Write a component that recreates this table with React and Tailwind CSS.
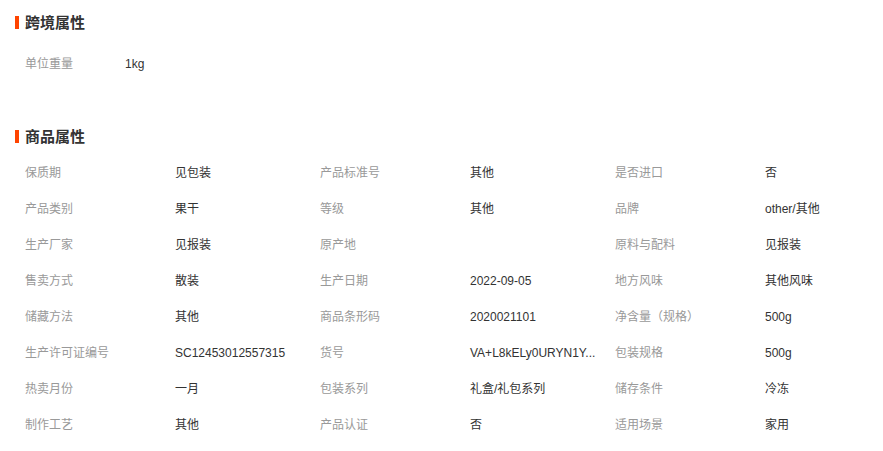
const crossAttrs = [{ label: "单位重量", value: "1kg" }];

const goodsAttrs = [
  ["保质期", "见包装"],
  ["产品标准号", "其他"],
  ["是否进口", "否"],
  ["产品类别", "果干"],
  ["等级", "其他"],
  ["品牌", "other/其他"],
  ["生产厂家", "见报装"],
  ["原产地", ""],
  ["原料与配料", "见报装"],
  ["售卖方式", "散装"],
  ["生产日期", "2022-09-05"],
  ["地方风味", "其他风味"],
  ["储藏方法", "其他"],
  ["商品条形码", "2020021101"],
  ["净含量（规格）", "500g"],
  ["生产许可证编号", "SC12453012557315"],
  ["货号", "VA+L8kELy0URYN1Y..."],
  ["包装规格", "500g"],
  ["热卖月份", "一月"],
  ["包装系列", "礼盒/礼包系列"],
  ["储存条件", "冷冻"],
  ["制作工艺", "其他"],
  ["产品认证", "否"],
  ["适用场景", "家用"],
];

function SectionTitle({ children, className = "" }) {
  return (
    <div className={`flex h-9 items-center pl-[15px] ${className}`}>
      <span className="h-[13px] w-[4px] bg-[#ff4400]" />
      <h3 className="ml-[6px] text-[15px] font-bold leading-none text-[#333]">
        {children}
      </h3>
    </div>
  );
}

export default function App() {
  return (
    <div
      className="min-h-[451px] w-[883px] bg-white pt-[4px] text-[12px]"
      style={{
        fontFamily: '"Liberation Sans", "Noto Sans CJK SC", sans-serif',
      }}
    >
      {/* 跨境属性 */}
      <SectionTitle>跨境属性</SectionTitle>
      <div className="mt-[6px] pl-[25px]">
        {crossAttrs.map((item) => (
          <div key={item.label} className="flex h-9 items-center">
            <span className="w-[100px] text-[#999]">{item.label}</span>
            <span className="text-[#333]">{item.value}</span>
          </div>
        ))}
      </div>

      {/* 商品属性 */}
      <SectionTitle className="mt-[36px]">商品属性</SectionTitle>
      <div className="mt-[1px] grid grid-cols-[150px_145px_150px_145px_150px_145px] pl-[25px]">
        {goodsAttrs.map(([label, value]) => (
          <div key={label} className="contents">
            <div className="flex h-9 items-center text-[#999]">{label}</div>
            <div className="flex h-9 items-center whitespace-nowrap text-[#333]">
              {value}
            </div>
          </div>
        ))}
      </div>
    </div>
  );
}
